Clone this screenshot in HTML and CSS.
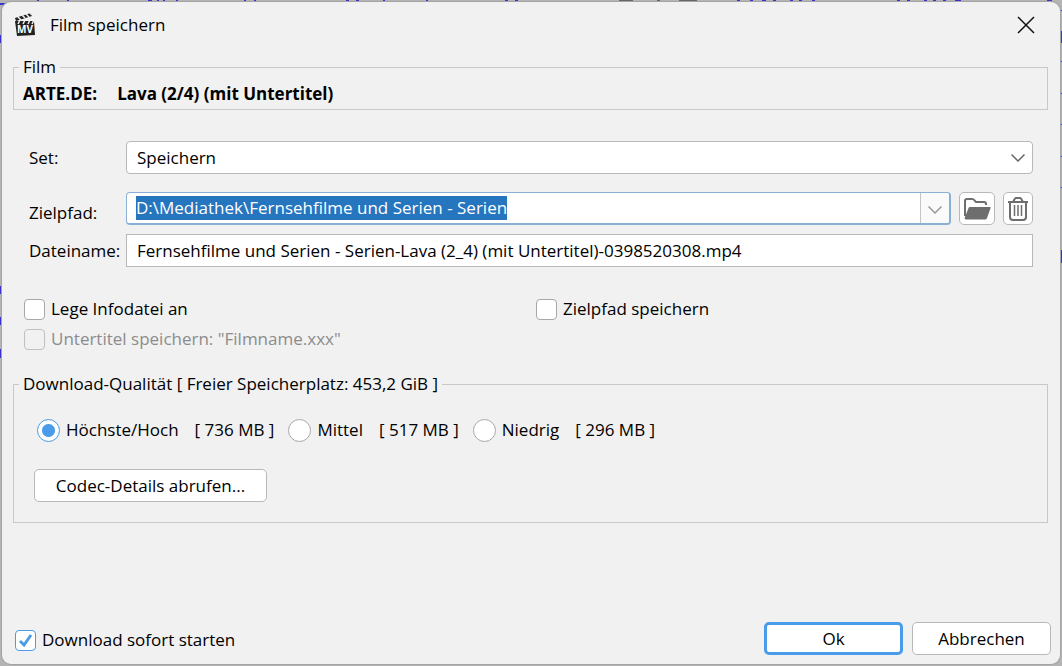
FILE: index.html
```
<!DOCTYPE html>
<html lang="de">
<head>
  <meta charset="UTF-8">
  <title>Film speichern</title>
  <meta name="viewport" content="width=device-width, initial-scale=1.0">
  <link rel="stylesheet" href="styles.css">
</head>
<body>
  <!-- main window behind the dialog -->
  <svg class="backdrop" width="100%" height="100%" aria-hidden="true">
    <g fill="#3a34cc">
      <rect x="37" width="2" height="2"/><rect x="67" width="2" height="2"/>
      <rect x="148" width="4" height="2"/><rect x="157" width="2" height="2"/><rect x="163" width="2" height="2"/><rect x="176" width="2" height="2"/>
      <rect x="244" width="2" height="2"/><rect x="254" width="2" height="2"/>
      <rect x="346" width="3" height="2"/><rect x="356" width="3" height="2"/><rect x="383" width="2" height="2"/><rect x="426" width="2" height="2"/>
      <rect x="505" width="3" height="2"/><rect x="515" width="3" height="2"/>
      <rect x="737" width="3" height="2"/><rect x="750" width="3" height="2"/><rect x="762" width="4" height="2"/><rect x="773" width="3" height="2"/>
      <rect x="790" width="3" height="2"/><rect x="799" width="3" height="2"/><rect x="812" width="3" height="2"/>
      <rect x="897" width="3" height="2"/><rect x="907" width="3" height="2"/><rect x="924" width="3" height="2"/><rect x="933" width="3" height="2"/><rect x="943" width="3" height="2"/><rect x="955" width="6" height="2"/>
      <rect x="1047" width="5" height="2"/>
      <rect y="3" width="6" height="2"/><rect y="35" width="2" height="8"/>
      <rect y="286" width="2" height="8"/><rect y="317" width="2" height="8"/><rect y="349" width="2" height="9"/>
    </g>
    <g fill="#666"><rect x="619" width="14" height="2"/><rect x="657" width="3" height="2"/><rect x="679" width="18" height="2"/></g>
    <svg x="100%" overflow="visible" fill="#3a34cc">
      <rect x="-2" y="10" width="2" height="1"/><rect x="-2" y="31" width="2" height="12"/><rect x="-2" y="61" width="2" height="1"/>
      <rect x="-2" y="93" width="2" height="1"/><rect x="-2" y="124" width="2" height="1"/><rect x="-2" y="156" width="2" height="1"/>
      <rect x="-2" y="187" width="2" height="1"/><rect x="-2" y="250" width="2" height="13"/>
    </svg>
  </svg>

  <form class="dialog" onsubmit="return false">
    <header class="titlebar">
      <svg class="app-icon" width="20" height="24" viewBox="0 0 20 24" aria-hidden="true">
        <path d="M0 5 16 0l1 3L1 8z" fill="#222"/>
        <path d="m3 4 3 3M7 2l3 3M11 1l3 3M15 0l2 2" stroke="#f1f1f1" stroke-width="1.500"/>
        <path d="M0 8h19l1 14-18 1z" fill="#222"/>
        <path d="m5 7-2 4M10 7l-2 4M15 7l-2 4M19 7l-2 4" stroke="#f1f1f1" stroke-width="1.500"/>
        <text x="10" y="20" text-anchor="middle" class="app-icon-text">MV</text>
      </svg>
      <h1>Film speichern</h1>
      <button type="button" class="close" aria-label="Schließen">
        <svg width="18" height="18" viewBox="0 0 18 18"><path d="m1 1 16 16M17 1 1 17" fill="none" stroke="#111" stroke-width="1.5"/></svg>
      </button>
    </header>

    <fieldset class="group">
      <legend>Film</legend>
      <p class="film"><span>ARTE.DE:</span><span>Lava (2/4) (mit Untertitel)</span></p>
    </fieldset>

    <div class="target">
      <label for="set">Set:</label>
      <div class="select-box">
        <select id="set"><option>Speichern</option></select>
        <svg class="chevron" width="14" height="8" viewBox="0 0 14 8" aria-hidden="true"><path d="m0.500 0.500 6.500 6.500 6.500-6.500"/></svg>
      </div>

      <label for="path" class="path-label">Zielpfad:</label>
      <div class="path-row">
        <div class="combo">
          <input id="path" type="text" spellcheck="false" value="D:\Mediathek\Fernsehfilme und Serien - Serien">
          <button type="button" aria-label="Pfade anzeigen">
            <svg width="14" height="8" viewBox="0 0 14 8"><path d="m0.500 0.500 6.500 6.500 6.500-6.500"/></svg>
          </button>
        </div>
        <button type="button" class="tool folder" aria-label="Ordner wählen">
          <svg width="28" height="22" viewBox="0 0 28 22">
            <path d="M2 18V3q0-2 2-2h5q2 0 3 2l1 1h8q2 0 2 2v1" fill="none" stroke="#6e6e6e" stroke-width="2"/>
            <path d="M7 9h20q1 0 .6 1L24 20q-.5 1.500-2 1.500H3Q1 21.500 2 19L5.500 10q.4-1 1.500-1z" fill="#6e6e6e"/>
          </svg>
        </button>
        <button type="button" class="tool trash" aria-label="Pfad löschen">
          <svg width="20" height="24" viewBox="0 0 20 24" fill="none" stroke="#6e6e6e" stroke-width="2">
            <path d="M0 5h20M5 5l2-3.500q.4-.5 1-.5h4q.6 0 1 .5L15 5M2 5v15q0 3 3 3h10q3 0 3-3V5"/>
            <path d="M6.500 8v11M10 8v11M13.500 8v11" stroke-width="1.500"/>
          </svg>
        </button>
      </div>

      <label for="filename">Dateiname:</label>
      <input id="filename" class="textbox" type="text" spellcheck="false" value="Fernsehfilme und Serien - Serien-Lava (2_4) (mit Untertitel)-0398520308.mp4">
    </div>

    <div class="options">
      <label class="check"><input type="checkbox">Lege Infodatei an</label>
      <label class="check"><input type="checkbox">Zielpfad speichern</label>
      <label class="check disabled"><input type="checkbox" disabled>Untertitel speichern: "Filmname.xxx"</label>
    </div>

    <fieldset class="group quality">
      <legend>Download-Qualität [ Freier Speicherplatz: 453,2 GiB ]</legend>
      <div class="radios">
        <label class="check"><input type="radio" name="quality" checked><span>Höchste/Hoch</span><span class="size">[ 736 MB ]</span></label>
        <label class="check"><input type="radio" name="quality"><span>Mittel</span><span class="size">[ 517 MB ]</span></label>
        <label class="check"><input type="radio" name="quality"><span>Niedrig</span><span class="size">[ 296 MB ]</span></label>
      </div>
      <button type="button" class="btn codec">Codec-Details abrufen...</button>
    </fieldset>

    <footer class="footer">
      <label class="check"><input type="checkbox" checked>Download sofort starten</label>
      <div class="buttons">
        <button type="submit" class="btn default">Ok</button>
        <button type="button" class="btn">Abbrechen</button>
      </div>
    </footer>
  </form>

  <script>
    const path = document.getElementById("path");
    path.focus();
    path.select();
  </script>
</body>
</html>
```
FILE: styles.css
```
* { box-sizing: border-box; }
body {
  margin: 0;
  min-height: 100vh;
  padding: 2px;
  display: flex;
  background: #b4b4b4;
  color: #000;
  font-family: "Open Sans", "Noto Sans", sans-serif;
  font-size: 17px;
  line-height: 24px;
}
button, input, select { font: inherit; color: inherit; }
button { padding: 0; }
.backdrop {
  position: absolute;
  inset: 0;
}
.dialog {
  position: relative;
  flex: 1;
  display: flex;
  flex-direction: column;
  padding: 0 9px 9px 11px;
  background: #f1f1f1;
  border-radius: 9px;
  box-shadow: 0 0 0 1px #a4a4a4;
}

.titlebar {
  display: flex;
  align-items: center;
  gap: 15px;
  height: 45px;
  padding: 0 16px 0 2px;
}
.app-icon-text {
  font-size: 10px;
  font-weight: bold;
  fill: #fff;
}
.titlebar h1 {
  flex: 1;
  margin: 0;
  font-size: 17px;
  font-weight: normal;
}
.close {
  display: flex;
  border: 0;
  background: none;
}

.group {
  min-width: 0;
  margin: 8px 3px 0 0;
  padding: 3px 5px 3px;
  border: 1px solid #c8c8c8;
}
.group legend { padding: 0 4px; }
.film {
  display: flex;
  gap: 20px;
  margin: 0;
  padding-left: 4px;
  font-weight: bold;
}

.target {
  display: grid;
  grid-template-columns: 97px 1fr;
  align-items: center;
  margin: 31px 18px 0 16px;
}
.target label { white-space: nowrap; }
.target .path-label { padding-top: 18px; }
.select-box { position: relative; }
.select-box select {
  appearance: none;
  display: block;
  width: 100%;
  height: 33px;
  padding: 0 32px 0 10px;
  border: 1px solid #b8b8b8;
  border-radius: 4px;
  background: #fff;
}
.chevron {
  position: absolute;
  right: 8px;
  top: 13px;
  pointer-events: none;
}
.select-box path, .combo path {
  fill: none;
  stroke: #666;
  stroke-width: 1.5;
}
.combo path { stroke: #999; }
.path-row {
  display: flex;
  gap: 8px;
  padding: 18px 0 9px;
}
.combo {
  flex: 1;
  display: flex;
  height: 33px;
  border: 1px solid #89b0d4;
  border-width: 1px 2px 2px 1px;
  border-radius: 4px;
  background: #fff;
  overflow: hidden;
}
.combo input {
  flex: 1;
  min-width: 0;
  padding: 0 9px;
  border: 0;
  outline: none;
  background: none;
}
.combo input::selection {
  background: #2675bf;
  color: #fff;
}
.combo button {
  width: 29px;
  border: 0;
  border-left: 1px solid #c4c4c4;
  background: #fafafa;
}
.tool {
  display: flex;
  align-items: center;
  justify-content: center;
  height: 33px;
  border: 1px solid #b8b8b8;
  border-radius: 5px;
  background: #fff;
}
.folder { width: 36px; }
.trash { width: 30px; }
.textbox {
  width: 100%;
  height: 33px;
  padding: 0 10px;
  border: 1px solid #b8b8b8;
  outline: none;
  background: #fff;
}

.check {
  display: flex;
  align-items: center;
  gap: 6px;
}
.check input {
  appearance: none;
  flex: none;
  width: 21px;
  height: 21px;
  margin: 0;
  border: 1px solid #a8a8a8;
  border-radius: 4px;
  background: #fff;
}
.check input[type="radio"] {
  width: 23px;
  height: 23px;
  border-radius: 50%;
}
.check input:checked { border-color: #4a9be8; }
.check input[type="radio"]:checked {
  background: radial-gradient(circle, #4a9be8 6px, #fff 7px);
}
.check input[type="checkbox"]:checked {
  background: #fff url("data:image/svg+xml,%3Csvg xmlns='http://www.w3.org/2000/svg' viewBox='0 0 19 19'%3E%3Cpath d='m4 10 4 4 7-10' fill='none' stroke='%234a9be8' stroke-width='3'/%3E%3C/svg%3E");
}
.disabled { color: #8c8c8c; }
.check.disabled input {
  border-color: #c0c0c0;
  background: none;
}
.options {
  display: grid;
  grid-template-columns: 1fr 1fr;
  grid-auto-rows: 30px;
  margin: 27px 3px 0 11px;
}

.quality {
  margin-top: 18px;
  padding: 22px 20px 20px;
}
.quality legend { margin-left: -15px; }
.radios {
  display: flex;
  gap: 14px;
  padding-left: 3px;
}
.size { margin-left: 10px; }
.btn {
  width: 139px;
  height: 33px;
  border: 1px solid #b8b8b8;
  border-radius: 5px;
  background: #fff;
}
.default { border: 3px solid #4a9be8; }
.codec {
  display: block;
  width: 233px;
  margin-top: 27px;
}

.footer {
  display: flex;
  align-items: center;
  justify-content: space-between;
  margin-top: auto;
  padding-left: 2px;
}
.footer .check { padding-top: 3px; }
.buttons {
  display: flex;
  gap: 9px;
}
```
